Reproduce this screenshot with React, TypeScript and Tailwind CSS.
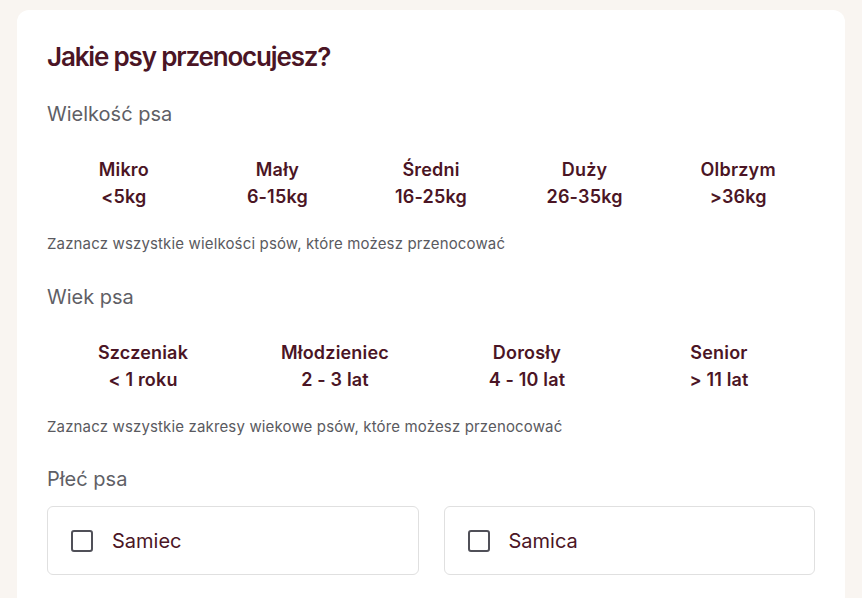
import React, { useState } from 'react';

const SIZES = [
  { id: 'mikro', label: 'Mikro', range: '<5kg' },
  { id: 'maly', label: 'Mały', range: '6-15kg' },
  { id: 'sredni', label: 'Średni', range: '16-25kg' },
  { id: 'duzy', label: 'Duży', range: '26-35kg' },
  { id: 'olbrzym', label: 'Olbrzym', range: '>36kg' },
];

const AGES = [
  { id: 'szczeniak', label: 'Szczeniak', range: '< 1 roku' },
  { id: 'mlodzieniec', label: 'Młodzieniec', range: '2 - 3 lat' },
  { id: 'dorosly', label: 'Dorosły', range: '4 - 10 lat' },
  { id: 'senior', label: 'Senior', range: '> 11 lat' },
];

const SEXES = [
  { id: 'samiec', label: 'Samiec' },
  { id: 'samica', label: 'Samica' },
];

function OptionTile({ label, range, active, onClick }: { label: string; range: string; active: boolean; onClick: () => void }) {
  return (
    <button
      onClick={onClick}
      className={`flex flex-col items-center text-[18px] leading-[27px] font-semibold tracking-[0.01em] text-[#4b1525] ${active ? 'underline' : ''}`}
    >
      <span>{label}</span>
      <span>{range}</span>
    </button>
  );
}

export default function App() {
  const [sizes, setSizes] = useState<string[]>([]);
  const [ages, setAges] = useState<string[]>([]);
  const [sexes, setSexes] = useState<string[]>([]);

  const toggle = (list: string[], setList: (v: string[]) => void, id: string) => {
    setList(list.includes(id) ? list.filter(x => x !== id) : [...list, id]);
  };

  return (
    <div className="min-h-screen bg-[#f9f5f1] pt-[10px] pl-[17px] pr-[17px]" style={{ fontFamily: 'Inter, "Noto Sans", sans-serif' }}>
      <div className="bg-white rounded-t-[12px] min-h-[588px] px-[30px] pt-[31px]">
        <h2 className="text-[26px] leading-[32px] font-semibold tracking-[-0.045em] text-[#4b1525]">
          Jakie psy przenocujesz?
        </h2>

        <p className="mt-[27px] text-[20px] leading-[28px] text-[#5f5f66]">Wielkość psa</p>
        <div className="mt-[28px] grid grid-cols-5">
          {SIZES.map(s => (
            <OptionTile key={s.id} label={s.label} range={s.range} active={sizes.includes(s.id)} onClick={() => toggle(sizes, setSizes, s.id)} />
          ))}
        </div>
        <p className="mt-[24px] text-[15px] leading-[20px] tracking-[0.01em] text-[#5a5a60]">
          Zaznacz wszystkie wielkości psów, które możesz przenocować
        </p>

        <p className="mt-[29px] text-[20px] leading-[28px] text-[#5f5f66]">Wiek psa</p>
        <div className="mt-[28px] grid grid-cols-4">
          {AGES.map(a => (
            <OptionTile key={a.id} label={a.label} range={a.range} active={ages.includes(a.id)} onClick={() => toggle(ages, setAges, a.id)} />
          ))}
        </div>
        <p className="mt-[24px] text-[15px] leading-[20px] tracking-[0.01em] text-[#5a5a60]">
          Zaznacz wszystkie zakresy wiekowe psów, które możesz przenocować
        </p>

        <p className="mt-[28px] text-[20px] leading-[28px] text-[#5f5f66]">Płeć psa</p>
        <div className="mt-[13px] grid grid-cols-2 gap-[25px]">
          {SEXES.map(s => (
            <label
              key={s.id}
              className="flex items-center h-[69px] px-[23px] gap-[19px] border border-[#e0e0e0] rounded-[6px] cursor-pointer"
            >
              <input
                type="checkbox"
                checked={sexes.includes(s.id)}
                onChange={() => toggle(sexes, setSexes, s.id)}
                className="appearance-none w-[22px] h-[22px] border-[2.5px] border-[#505058] rounded-[3px] checked:bg-[#4b1525] checked:border-[#4b1525]"
              />
              <span className="text-[20px] leading-[28px] text-[#4b1525]">{s.label}</span>
            </label>
          ))}
        </div>
      </div>
    </div>
  );
}
